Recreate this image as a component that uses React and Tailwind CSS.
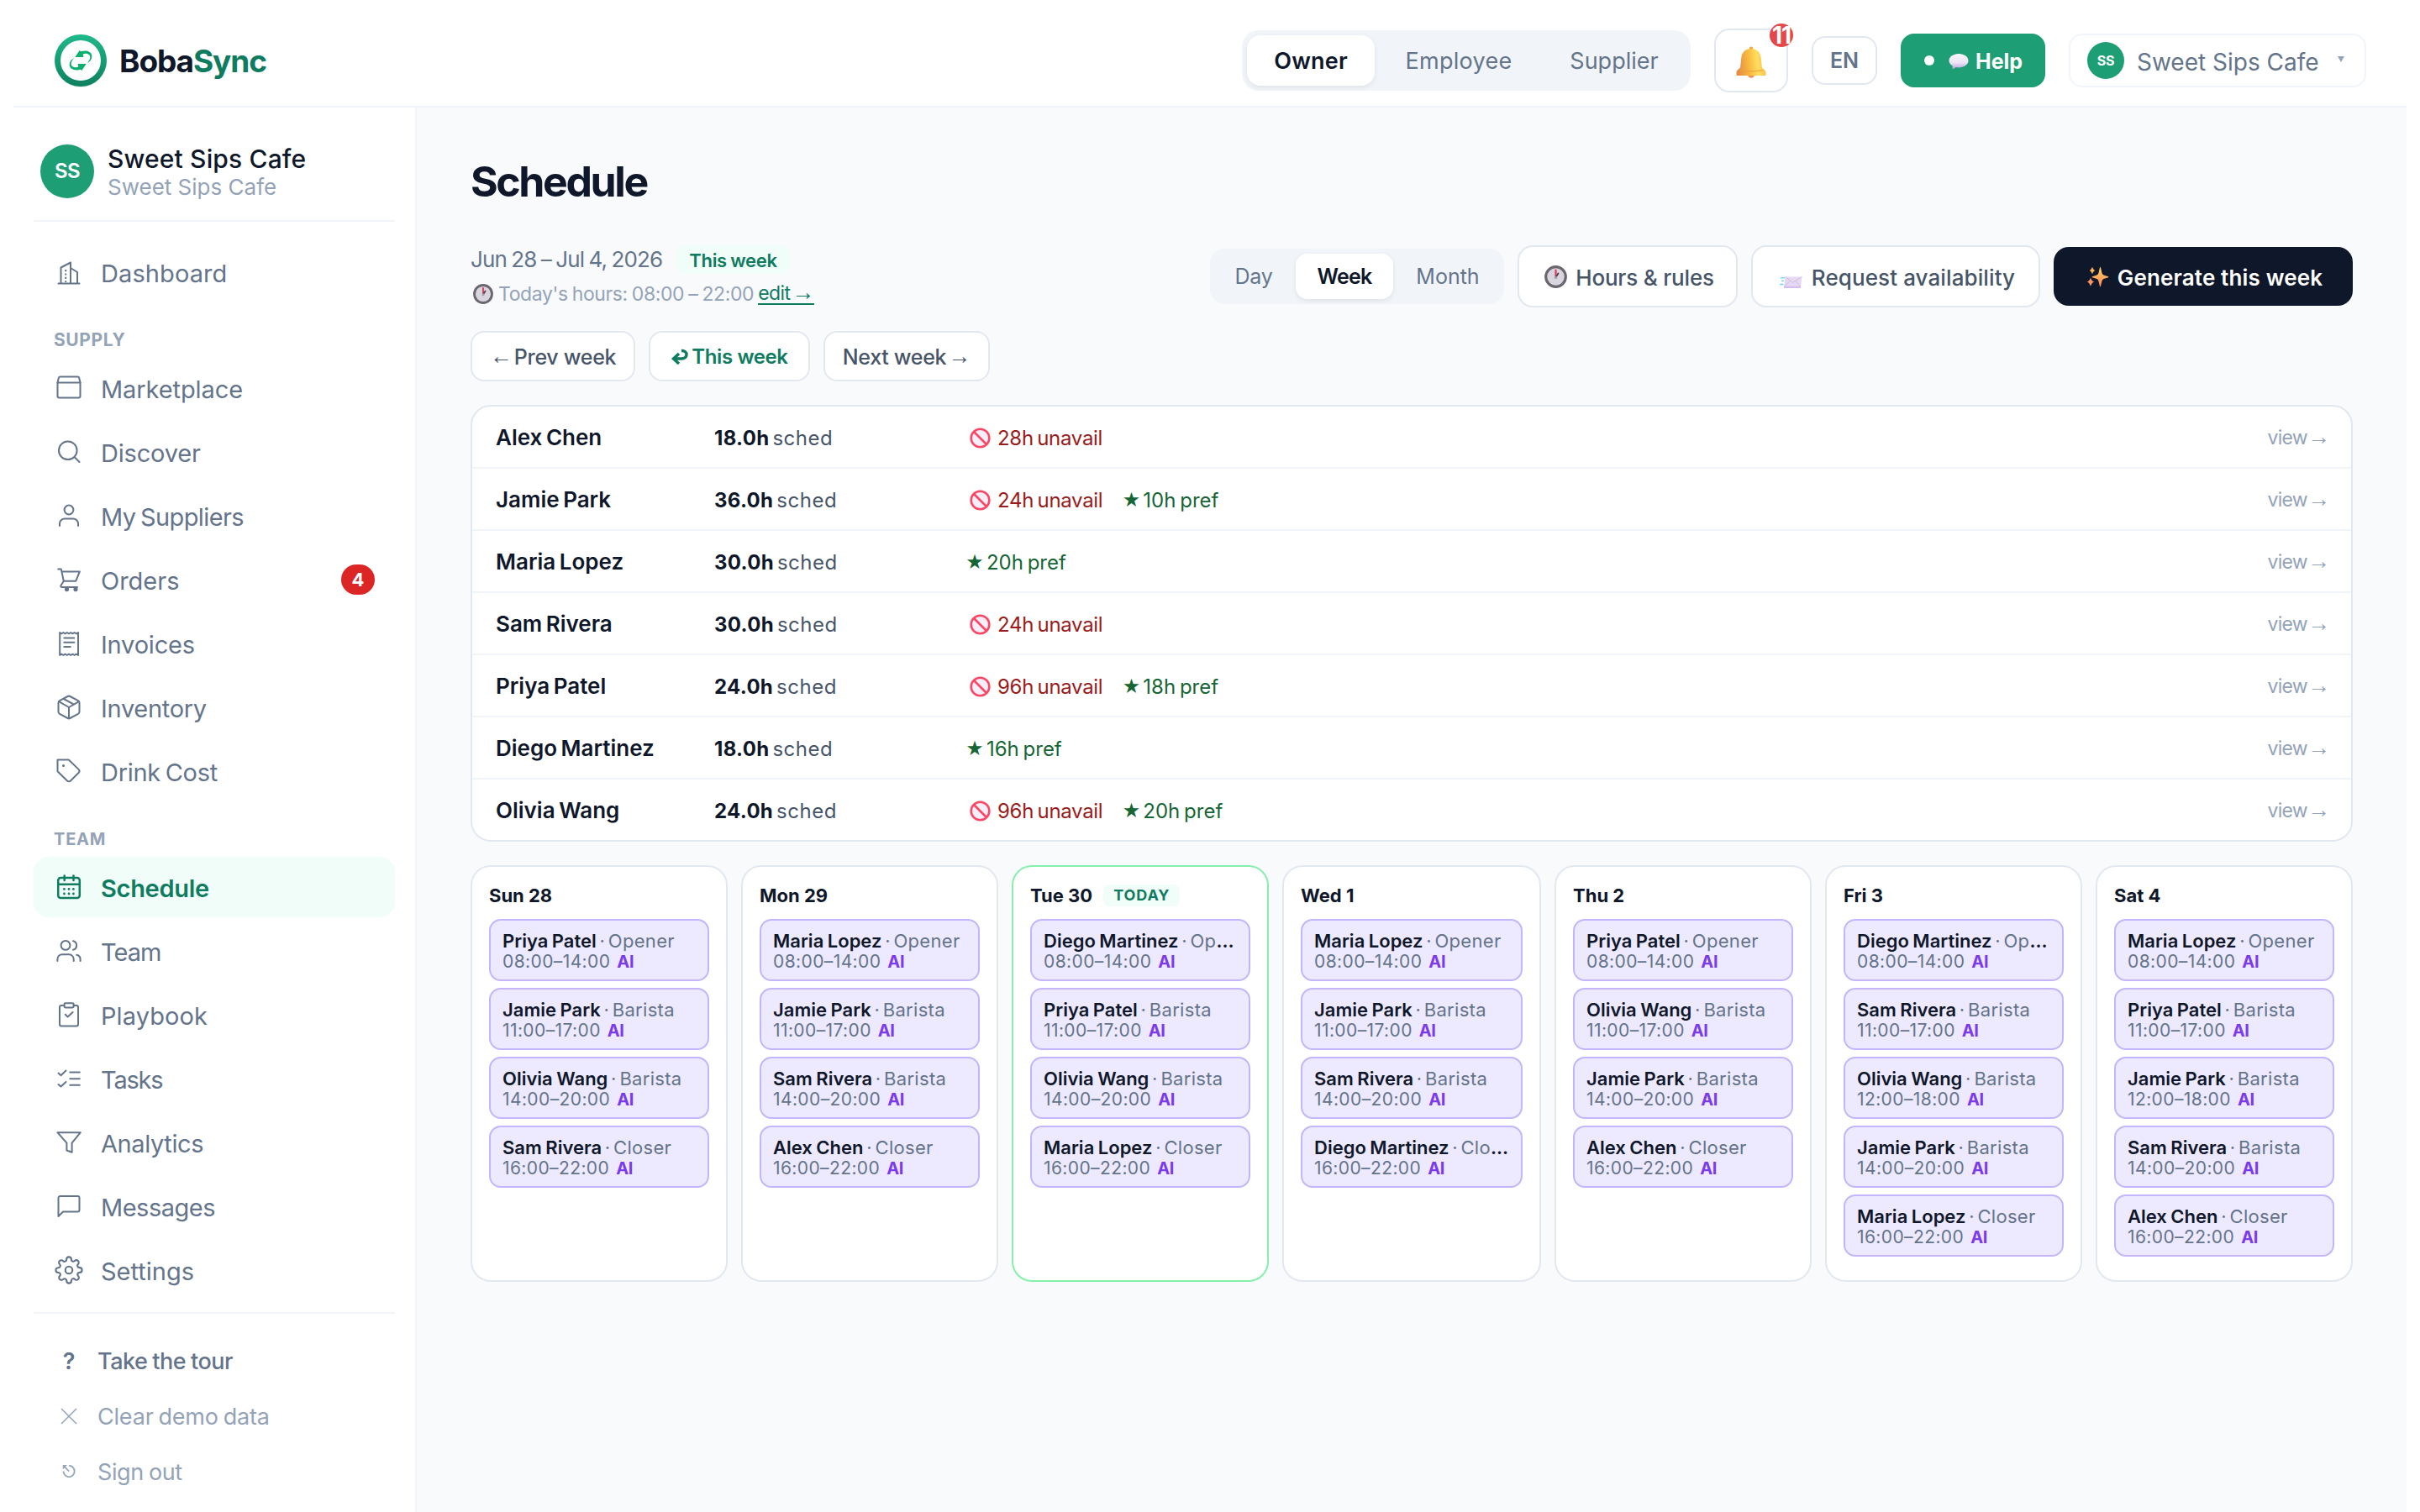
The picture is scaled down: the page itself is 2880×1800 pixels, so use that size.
import { FiSettings } from 'react-icons/fi';

const navIcons = {
  dashboard: (
    <>
      <path d="M6.5 29V10.5L18 4.5V29M18 11l8 5V29M3.5 29.5h25" />
      <path d="M12.2 13v15" strokeDasharray="2.2 2.2" strokeLinecap="butt" />
    </>
  ),
  marketplace: (
    <>
      <path d="M2.5 9.5v16a2 2 0 0 0 2 2h23a2 2 0 0 0 2-2v-16z" />
      <path d="M2.5 9.5 3.8 4a2 2 0 0 1 2-1.6h20.4a2 2 0 0 1 2 1.6l1.3 5.5" />
    </>
  ),
  discover: (
    <>
      <circle cx="14.8" cy="14.3" r="10.8" />
      <path d="m22.7 22.2 5.8 5.8" />
    </>
  ),
  suppliers: (
    <>
      <circle cx="16" cy="9" r="5.4" />
      <path d="M5 28v-2.5a6 6 0 0 1 6-6h10a6 6 0 0 1 6 6V28" />
    </>
  ),
  orders: (
    <>
      <path d="M3.2 3.6h3.6l3 14.2h14.4l4.6-11.3H7.5M9.8 17.8 6.5 23a1.3 1.3 0 0 0 1.2 2H26" />
      <circle cx="13.5" cy="27.6" r="1.6" fill="currentColor" />
      <circle cx="24" cy="27.6" r="1.6" fill="currentColor" />
    </>
  ),
  invoices: (
    <>
      <path d="M5.2 3v27l2-1.3 2.2 1.3 2.2-1.3 2.2 1.3 2.2-1.3 2.2 1.3 2.2-1.3 2.2 1.3 2.2-1.3 2.2 1.3V3l-2.2 1.3L22.6 3l-2.2 1.3L18.2 3 16 4.3 13.8 3l-2.2 1.3L9.4 3 7.2 4.3z" />
      <path d="M10.3 9.5h12M10.3 14.8h12M10.3 20h7.5" />
    </>
  ),
  inventory: (
    <>
      <path d="M14.6 3a3 3 0 0 1 2.8 0l9.6 5.2a3 3 0 0 1 1.5 2.6v10.4a3 3 0 0 1-1.5 2.6l-9.6 5.2a3 3 0 0 1-2.8 0L5 23.8a3 3 0 0 1-1.5-2.6V10.8A3 3 0 0 1 5 8.2z" />
      <path d="M4 9.2 16 16l12-6.8M16 16v13.3M9.8 6 22 12.6" />
    </>
  ),
  drink: (
    <>
      <path d="M2.5 2.5h13.3l12 11.6a2.8 2.8 0 0 1 0 3.6l-9.8 9.8a2.8 2.8 0 0 1-4 0L2.5 16.2z" />
      <circle cx="9.5" cy="9.5" r="0.6" fill="currentColor" />
    </>
  ),
  schedule: (
    <>
      <rect x="3.2" y="5" width="25.6" height="24" rx="3" />
      <path d="M3.2 12.8h25.6M10.7 2.5v5.6M21.5 2.5v5.6" />
      <path d="M10.4 18.4h.01M16 18.4h.01M21.4 18.4h.01M10.4 24h.01M16 24h.01M21.4 24h.01" strokeWidth="2.8" />
    </>
  ),
  team: (
    <>
      <circle cx="12" cy="9.4" r="5.4" />
      <path d="M2.4 28v-2.2a5.5 5.5 0 0 1 5.5-5.5h8.3a5.5 5.5 0 0 1 5.5 5.5V28M21 4.2a5.4 5.4 0 0 1 0 10.5M25.2 20.7a5.5 5.5 0 0 1 4.4 5.2V28" />
    </>
  ),
  playbook: (
    <>
      <path d="M10.5 5H7a2 2 0 0 0-2 2v20.5a2 2 0 0 0 2 2h18a2 2 0 0 0 2-2V7a2 2 0 0 0-2-2h-3.5" />
      <rect x="10.5" y="2.2" width="11.2" height="5.2" rx="1.4" />
      <path d="m11.8 15.8 2.8 2.8 6-5.6" />
    </>
  ),
  tasks: (
    <path d="m3.5 9.6 3 2.6 6-5.6M3.5 23l3 2.6 6-5.6M17.3 8.6h11.5M17.3 16.2h11.5M17.3 23.8h11.5" />
  ),
  analytics: <path d="M2.4 4.2h27.4L19.6 16.6v11.2l-6.2-2.3v-8.9z" />,
  messages: <path d="M3.5 28V6a2 2 0 0 1 2-2h21a2 2 0 0 1 2 2v14.5a2 2 0 0 1-2 2H9z" />,
};

function NavIcon({ name, active }) {
  if (name === 'settings') return <FiSettings size={34} strokeWidth={1.5} />;
  return (
    <svg
      width="32"
      height="32"
      viewBox="0 0 32 32"
      fill="none"
      stroke="currentColor"
      strokeWidth={active ? 2.5 : 2}
      strokeLinecap="round"
      strokeLinejoin="round"
    >
      {navIcons[name]}
    </svg>
  );
}

function Logo() {
  return (
    <svg width="64" height="64" viewBox="0 0 64 64" className="overflow-visible">
      <defs>
        <linearGradient id="ring" x1="0" y1="0" x2="0" y2="1">
          <stop offset="0" stopColor="#1fb98b" />
          <stop offset="1" stopColor="#0e8060" />
        </linearGradient>
      </defs>
      <circle cx="32" cy="33" r="31" fill="#0e8060" opacity="0.15" />
      <circle cx="32" cy="32" r="31" fill="url(#ring)" />
      <circle cx="32" cy="32" r="24" fill="#fff" />
      <g fill="#0bb06e">
        <path d="M25.3 28 30.7 20l1.4 1.2C39 19.5 44.5 21.5 45.2 26c.5 4-1.6 7.3-5.2 8.8 3.5-3.8 4.3-7.8 1.8-9.8-2-1.5-4.6-1.5-7.1-.6l.7 3.6z" />
        <path
          d="M25.3 28 30.7 20l1.4 1.2C39 19.5 44.5 21.5 45.2 26c.5 4-1.6 7.3-5.2 8.8 3.5-3.8 4.3-7.8 1.8-9.8-2-1.5-4.6-1.5-7.1-.6l.7 3.6z"
          transform="rotate(180 32 32)"
        />
      </g>
    </svg>
  );
}

function Bell() {
  return (
    <svg width="36" height="38" viewBox="0 0 36 38">
      <defs>
        <linearGradient id="bell" x1="0" y1="0.4" x2="1" y2="0.3">
          <stop offset="0" stopColor="#e58a45" />
          <stop offset="0.4" stopColor="#f9b93f" />
          <stop offset="0.7" stopColor="#ffdf5e" />
          <stop offset="1" stopColor="#f7b748" />
        </linearGradient>
      </defs>
      <circle cx="18" cy="33.5" r="4.2" fill="#ef8f5c" />
      <circle cx="18" cy="2.8" r="2.2" fill="#f3a73d" />
      <path d="M18 3c7 0 11 4.500 11.700 11l1.200 11c.3 1.800 4.600 3 4.600 6.500V34c0 .6-.4 1-1 1H1.500c-.6 0-1-.4-1-1v-2.500C.5 28 4.800 26.800 5.100 25l1.200-11C7 7.500 11 3 18 3z" fill="url(#bell)" />
      <path d="M4 28.500c9 1.600 19 1.600 28 0" stroke="#eda03c" strokeWidth="1.500" fill="none" opacity="0.7" />
    </svg>
  );
}

function Clock({ size }) {
  return (
    <svg width={size} height={size} viewBox="0 0 24 24" className="shrink-0">
      <circle cx="12" cy="12" r="10.500" fill="#d9d5df" stroke="#6b6670" strokeWidth="2.800" />
      <path d="M12 12.500V5" stroke="#e0405e" strokeWidth="2" strokeLinecap="round" />
      <path d="m12 12.500 2.600-4" stroke="#4a4650" strokeWidth="1.800" strokeLinecap="round" />
      <circle cx="12" cy="12.800" r="1.500" fill="#a49cb0" />
    </svg>
  );
}

function Bubble() {
  return (
    <svg width="24" height="20" viewBox="0 0 24 20">
      <defs>
        <linearGradient id="bubble" x1="0" y1="0" x2="0" y2="1">
          <stop offset="0" stopColor="#faf7fd" />
          <stop offset="0.6" stopColor="#ece4f6" />
          <stop offset="1" stopColor="#b9a3dd" />
        </linearGradient>
      </defs>
      <path d="M12 1c6.400 0 11.500 3.600 11.500 8.200S18.400 17.400 12 17.400c-1.300 0-2.500-.1-3.600-.4-.8.800-2 2-3.300 2-.7 0-.4-2.300-.4-3.600C2.200 13.900.5 11.700.5 9.200.5 4.600 5.600 1 12 1z" fill="url(#bubble)" />
    </svg>
  );
}

function Envelope() {
  return (
    <svg width="27" height="15" viewBox="0 0 27 15">
      <path d="M1 1.800h5M2 5.300h3M.5 9.500h4" stroke="#5fd0f5" strokeWidth="1.300" />
      <path d="M6.500.5h20L24.800 14H5z" fill="#e6daf2" />
      <path d="M5.200 11.800H25L24.800 14H5z" fill="#d5bdf0" />
      <path d="m6.500.5 9 6.800 11-6.800M5.200 12l7.300-6.500M25 12l-6.500-6.500" stroke="#c9b4de" fill="none" strokeWidth="0.800" />
    </svg>
  );
}

function Sparkles() {
  return (
    <svg width="27" height="25" viewBox="0 0 27 25">
      <defs>
        <linearGradient id="spark" x1="0" y1="0" x2="0" y2="1">
          <stop offset="0" stopColor="#ffd257" />
          <stop offset="1" stopColor="#ff8660" />
        </linearGradient>
      </defs>
      <path d="M16.500.8c.9 0 1.400 7.300 3 9 1.400 1.500 7 2 7 3s-5.600 1.600-7 3c-1.600 1.700-2.100 8.700-3 8.700s-1.500-7-3-8.700c-1.400-1.400-7-2-7-3s5.600-1.500 7-3c1.500-1.700 2.100-9 3-9z" fill="url(#spark)" />
      <path d="M7 1c.5 0 .8 3.300 3.700 4C7.800 5.700 7.500 9 7 9s-.8-3.300-3.700-4C6.200 4.300 6.500 1 7 1z" fill="#ffb35a" />
      <path d="M5 14c.6 0 .9 3.800 4.500 4.600C5.900 19.400 5.600 23.500 5 23.500s-.9-4.100-4.500-4.900C4.100 17.800 4.400 14 5 14z" fill="#ff9368" />
    </svg>
  );
}

function Ban() {
  return (
    <svg width="25" height="25" viewBox="0 0 25 25">
      <circle cx="12.500" cy="12.500" r="10.800" fill="#f6effb" stroke="#fb4764" strokeWidth="2.600" />
      <path d="m5 5 15 15" stroke="#fb4764" strokeWidth="2.600" />
    </svg>
  );
}

const topNav = [{ id: 'dashboard', label: 'Dashboard', text: 'tracking-[0.1px]' }];

const supplyNav = [
  { id: 'marketplace', label: 'Marketplace', text: 'tracking-[-0.1px]' },
  { id: 'discover', label: 'Discover', text: 'tracking-[-0.2px]' },
  { id: 'suppliers', label: 'My Suppliers', text: 'tracking-[-0.6px] [word-spacing:-2px]' },
  { id: 'orders', label: 'Orders', text: '', badge: 4 },
  { id: 'invoices', label: 'Invoices', text: 'tracking-[-0.2px]' },
  { id: 'inventory', label: 'Inventory', text: 'tracking-[-0.3px]' },
  { id: 'drink', label: 'Drink Cost', text: 'tracking-[-0.3px] [word-spacing:-2px]' },
];

const teamNav = [
  { id: 'schedule', label: 'Schedule', text: 'tracking-[-0.3px]' },
  { id: 'team', label: 'Team', text: 'tracking-[-1px]' },
  { id: 'playbook', label: 'Playbook', text: 'tracking-[0.1px]' },
  { id: 'tasks', label: 'Tasks', text: 'tracking-[-1.2px]' },
  { id: 'analytics', label: 'Analytics', text: 'tracking-[-0.4px]' },
  { id: 'messages', label: 'Messages', text: 'tracking-[-0.5px]' },
  { id: 'settings', label: 'Settings', text: '' },
];

const staff = [
  { name: 'Alex Chen', hours: '18.0h', unavail: '28h' },
  { name: 'Jamie Park', hours: '36.0h', unavail: '24h', pref: '10h' },
  { name: 'Maria Lopez', hours: '30.0h', pref: '20h' },
  { name: 'Sam Rivera', hours: '30.0h', unavail: '24h' },
  { name: 'Priya Patel', hours: '24.0h', unavail: '96h', pref: '18h' },
  { name: 'Diego Martinez', hours: '18.0h', pref: '16h' },
  { name: 'Olivia Wang', hours: '24.0h', unavail: '96h', pref: '20h' },
];

const days = [
  {
    label: 'Sun 28',
    shifts: [
      ['Priya Patel', 'Opener', '08:00–14:00'],
      ['Jamie Park', 'Barista', '11:00–17:00'],
      ['Olivia Wang', 'Barista', '14:00–20:00'],
      ['Sam Rivera', 'Closer', '16:00–22:00'],
    ],
  },
  {
    label: 'Mon 29',
    shifts: [
      ['Maria Lopez', 'Opener', '08:00–14:00'],
      ['Jamie Park', 'Barista', '11:00–17:00'],
      ['Sam Rivera', 'Barista', '14:00–20:00'],
      ['Alex Chen', 'Closer', '16:00–22:00'],
    ],
  },
  {
    label: 'Tue 30',
    today: true,
    shifts: [
      ['Diego Martinez', 'Opener', '08:00–14:00'],
      ['Priya Patel', 'Barista', '11:00–17:00'],
      ['Olivia Wang', 'Barista', '14:00–20:00'],
      ['Maria Lopez', 'Closer', '16:00–22:00'],
    ],
  },
  {
    label: 'Wed 1',
    shifts: [
      ['Maria Lopez', 'Opener', '08:00–14:00'],
      ['Jamie Park', 'Barista', '11:00–17:00'],
      ['Sam Rivera', 'Barista', '14:00–20:00'],
      ['Diego Martinez', 'Closer', '16:00–22:00'],
    ],
  },
  {
    label: 'Thu 2',
    shifts: [
      ['Priya Patel', 'Opener', '08:00–14:00'],
      ['Olivia Wang', 'Barista', '11:00–17:00'],
      ['Jamie Park', 'Barista', '14:00–20:00'],
      ['Alex Chen', 'Closer', '16:00–22:00'],
    ],
  },
  {
    label: 'Fri 3',
    shifts: [
      ['Diego Martinez', 'Opener', '08:00–14:00'],
      ['Sam Rivera', 'Barista', '11:00–17:00'],
      ['Olivia Wang', 'Barista', '12:00–18:00'],
      ['Jamie Park', 'Barista', '14:00–20:00'],
      ['Maria Lopez', 'Closer', '16:00–22:00'],
    ],
  },
  {
    label: 'Sat 4',
    shifts: [
      ['Maria Lopez', 'Opener', '08:00–14:00'],
      ['Priya Patel', 'Barista', '11:00–17:00'],
      ['Jamie Park', 'Barista', '12:00–18:00'],
      ['Sam Rivera', 'Barista', '14:00–20:00'],
      ['Alex Chen', 'Closer', '16:00–22:00'],
    ],
  },
];

function Arrow({ children }) {
  return <span className="-mt-1.5 font-['Noto_Sans'] text-[27px] leading-none font-normal tracking-normal">{children}</span>;
}

function Header() {
  return (
    <header className="mx-4 h-32 shrink-0 flex items-center pt-[18px] pl-12 pr-12 border-b-2 border-[#f1f5f9]">
      <div className="flex items-center gap-3.5">
        <Logo />
        <span className="text-[37px] font-bold leading-none tracking-[-1.1px] text-[#0f172a]">
          Boba<span className="text-[#0f7b5f]">Sync</span>
        </span>
      </div>

      <div className="ml-auto flex items-center gap-7">
        <div className="flex gap-1 p-1.5 h-[72px] rounded-[20px] bg-[#f1f5f9] text-[27px] text-[#64748b]">
          <button className="w-[152px] pt-0.5 rounded-2xl bg-white shadow-[0_2px_6px_rgba(0,0,0,0.08)] font-semibold text-[#0f172a] tracking-[0.2px]">
            Owner
          </button>
          <button className="w-[192px] pt-0.5 tracking-[0.3px]">Employee</button>
          <button className="w-[170px] pt-0.5">Supplier</button>
        </div>

        <button className="relative w-[88px] h-[76px] flex items-center justify-center pt-1 rounded-[18px] border-2 border-[#e2e8f0] bg-white">
          <Bell />
          <span className="absolute -top-2 -right-2 w-7 h-7 flex items-center justify-center rounded-full bg-[#e54848] text-white text-[28px] leading-none font-bold tracking-[-1px]">
            11
          </span>
        </button>

        <button className="w-[78px] h-[58px] rounded-2xl border-2 border-[#e2e8f0] bg-white text-[25px] leading-none font-semibold text-[#64748b]">
          EN
        </button>

        <button className="w-[172px] h-16 pl-7 flex items-center rounded-2xl bg-[#1d9e75] text-white">
          <span className="w-3 h-3 rounded-full bg-white" />
          <span className="ml-[17px] mt-0.5"><Bubble /></span>
          <span className="ml-2 mt-0.5 text-[25px] leading-none font-bold">Help</span>
        </button>

        <button className="w-[354px] h-16 px-5 flex items-center rounded-2xl border-2 border-[#f1f5f9] bg-white">
          <span className="w-11 h-11 flex items-center justify-center rounded-full bg-[#1d9e75] text-white text-[16px] leading-none font-bold tracking-[-0.3px]">
            SS
          </span>
          <span className="ml-[15px] mt-[3px] text-[28px] leading-none text-[#64748b]">Sweet Sips Cafe</span>
          <svg width="10" height="8" viewBox="0 0 10 8" className="ml-auto mr-[3px] mb-1">
            <path d="M1 1h8L5 8z" fill="#94a3b8" />
          </svg>
        </button>
      </div>
    </header>
  );
}

function NavList({ items, activeItem }) {
  return (
    <nav className="flex flex-col gap-1">
      {items.map((item) => (
        <button
          key={item.id}
          className={`h-[72px] px-6 flex items-center gap-5 rounded-[18px] text-[29px] leading-none ${
            activeItem === item.id ? 'bg-[#f0fdf9] text-[#0f7b5f] font-semibold' : 'text-[#64748b]'
          }`}
        >
          <span className="w-9 flex justify-center">
            <NavIcon name={item.id} active={activeItem === item.id} />
          </span>
          <span className={`pt-[3px] ${item.text}`}>{item.label}</span>
          {item.badge && (
            <span className="ml-auto w-10 h-9 flex items-center justify-center rounded-full bg-[#dc2626] text-white text-[22px] font-bold">
              {item.badge}
            </span>
          )}
        </button>
      ))}
    </nav>
  );
}

function Sidebar() {
  return (
    <aside className="w-[480px] shrink-0 h-full px-6 pt-11 bg-white border-r-2 border-[#f1f5f9]">
      {/* Account */}
      <div className="flex gap-4 px-2 pb-[22px] border-b-2 border-[#f1f5f9]">
        <span className="w-16 h-16 flex items-center justify-center rounded-full bg-[#1d9e75] text-white text-[24px] font-semibold tracking-[-0.5px]">
          SS
        </span>
        <div>
          <div className="text-[30px] leading-[34px] font-medium text-[#0f172a] tracking-[0.15px]">Sweet Sips Cafe</div>
          <div className="text-[26px] leading-[34px] text-[#94a3b8]">Sweet Sips Cafe</div>
        </div>
      </div>

      <div className="mt-6">
        <NavList items={topNav} />
      </div>
      <div className="h-[66px] pt-[34px] px-6 text-[21px] leading-[22px] font-bold text-[#94a3b8] tracking-[0.6px]">SUPPLY</div>
      <NavList items={supplyNav} />
      <div className="h-[66px] pt-[34px] px-6 text-[20px] leading-[22px] font-bold text-[#94a3b8] tracking-[0.8px]">TEAM</div>
      <NavList items={teamNav} activeItem="schedule" />

      {/* Footer links */}
      <div className="mt-3.5 pt-[23px] border-t-2 border-[#f1f5f9] text-[27px] leading-none text-[#94a3b8]">
        <div className="h-[66px] px-6 flex items-center gap-4 font-medium text-[#64748b]">
          <span className="w-9 text-center font-semibold">?</span>
          <span className="tracking-[-0.45px] [word-spacing:-1px]">Take the tour</span>
        </div>
        <div className="h-[66px] px-6 flex items-center gap-4">
          <span className="w-9 flex justify-center">
            <svg width="20" height="20" viewBox="0 0 20 20" stroke="currentColor" strokeWidth="1.500">
              <path d="m1 1 18 18M19 1 1 19" />
            </svg>
          </span>
          <span className="tracking-[-0.2px] [word-spacing:-1.500px]">Clear demo data</span>
        </div>
        <div className="h-[66px] px-6 flex items-center gap-4">
          <span className="w-9 text-center text-[20px]">⎋</span>
          <span className="tracking-[-0.4px] [word-spacing:-1px]">Sign out</span>
        </div>
      </div>
    </aside>
  );
}

function Toolbar() {
  return (
    <div className="mt-[46px] h-[74px] flex items-start justify-between">
      <div>
        <div className="h-[34px] flex items-center gap-4">
          <span className="text-[26px] leading-none text-[#64748b] tracking-[-0.9px] [word-spacing:-1px]">
            Jun 28 – Jul 4, 2026
          </span>
          <span className="h-[34px] px-4 pt-0.5 flex items-center rounded-xl bg-[#f0fdf9] text-[22px] leading-none font-semibold text-[#0f7b5f] tracking-[-0.3px] [word-spacing:-1px]">
            This week
          </span>
        </div>
        <div className="mt-[9px] h-[30px] pl-[3px] flex items-center text-[23px] leading-none text-[#94a3b8]">
          <Clock size={24} />
          <span className="ml-1.5 tracking-[-0.4px] [word-spacing:-1px]">Today's hours: 08:00 – 22:00</span>
          <span className="ml-[5px] h-[26px] flex items-center gap-0.5 border-b-2 border-[#0f7b5f] text-[#0f7b5f] tracking-[-0.6px]">
            edit <Arrow>→</Arrow>
          </span>
        </div>
      </div>

      <div className="h-[74px] flex items-center gap-4">
        <div className="h-[66px] p-1.5 flex gap-1 rounded-[18px] bg-[#f1f5f9] text-[25px] text-[#64748b]">
          <button className="w-[92px] pt-0.5 tracking-[-0.3px]">Day</button>
          <button className="w-[116px] pt-0.5 rounded-[14px] bg-white shadow-[0_2px_6px_rgba(0,0,0,0.08)] font-semibold text-[#0f172a] tracking-[-0.8px]">
            Week
          </button>
          <button className="w-[122px] pt-0.5">Month</button>
        </div>
        <button className="w-[262px] h-[74px] pl-1 flex items-center justify-center gap-[10px] rounded-[18px] border-2 border-[#e2e8f0] bg-white text-[26px] leading-none font-medium text-[#475569]">
          <Clock size={27} />
          <span className="mt-[3px] tracking-[-0.2px]">Hours &amp; rules</span>
        </button>
        <button className="w-[344px] h-[74px] pl-1 flex items-center justify-center gap-[11px] rounded-[18px] border-2 border-[#e2e8f0] bg-white text-[26px] leading-none font-medium text-[#475569]">
          <span className="mt-[15px]"><Envelope /></span>
          <span className="mt-[3px] tracking-[0.1px]">Request availability</span>
        </button>
        <button className="w-[356px] h-[70px] pl-[3px] flex items-center justify-center gap-[10px] rounded-[18px] bg-[#0f172a] text-[26px] leading-none font-semibold text-white">
          <Sparkles />
          <span className="mt-[3px] tracking-[0.15px]">Generate this week</span>
        </button>
      </div>
    </div>
  );
}

function WeekNav() {
  return (
    <div className="mt-7 flex gap-4 text-[25px] leading-none font-medium text-[#475569] [word-spacing:-2px]">
      <button className="w-[196px] h-[60px] pt-0.5 flex items-center justify-center gap-0.5 rounded-2xl border-2 border-[#e2e8f0] bg-white tracking-[-0.3px]">
        <Arrow>←</Arrow> Prev week
      </button>
      <button className="w-[192px] h-[60px] pt-0.5 flex items-center justify-center gap-[3px] rounded-2xl border-2 border-[#e2e8f0] bg-white text-[24px] font-semibold text-[#0f7b5f] tracking-[-0.4px]">
        <svg width="22" height="20" viewBox="0 0 22 20" fill="none" stroke="currentColor" strokeWidth="3.500">
          <path d="M13 2.500c8-.5 8 9.500 0 9.500H5M10 6l-6.500 6 6.500 6" />
        </svg>
        This week
      </button>
      <button className="w-[198px] h-[60px] pt-0.5 flex items-center justify-center gap-0.5 rounded-2xl border-2 border-[#e2e8f0] bg-white tracking-[-0.3px]">
        Next week <Arrow>→</Arrow>
      </button>
    </div>
  );
}

function StaffTable() {
  return (
    <div className="mt-7 rounded-[24px] border-2 border-[#e2e8f0] bg-white divide-y-2 divide-[#f1f5f9]">
      {staff.map((s) => (
        <div key={s.name} className="h-[74px] last:h-[72px] pt-px flex items-center px-7 text-[24px] leading-none">
          <span className="w-[260px] text-[26px] font-semibold text-[#0f172a] [word-spacing:-2px]">{s.name}</span>
          <span className="w-[299px] pt-0.5 flex gap-1 text-[#475569]">
            <b className="font-bold text-[#0f172a] tracking-[0.3px]">{s.hours}</b>
            <span className="tracking-[0.5px]">sched</span>
          </span>
          <span className="pt-0.5 flex gap-[23px] [word-spacing:-2px]">
            {s.unavail && (
              <span className="flex items-center gap-2 pl-[5px] text-[#991b1b]">
                <Ban />
                <span className="tracking-[-0.3px]">{s.unavail} unavail</span>
              </span>
            )}
            {s.pref && (
              <span className="flex items-center gap-[3px] text-[#166534]">
                <span className="text-[21px]">★</span>
                <span>{s.pref} pref</span>
              </span>
            )}
          </span>
          <span className="ml-auto -mr-[3px] pt-0.5 flex items-center text-[23px] text-[#94a3b8] tracking-[-0.7px]">
            view <Arrow>→</Arrow>
          </span>
        </div>
      ))}
    </div>
  );
}

function Shift({ name, role, time }) {
  return (
    <div className="h-[74px] pt-3 pl-3.5 pr-[11px] rounded-[14px] border-2 border-[#c4b5fd] bg-[#ede9fe]">
      <div className="truncate text-[22px] leading-[25px] font-semibold text-[#0f172a] [word-spacing:-1px]">
        {name}
        <span className="font-normal text-[#64748b] tracking-[0.3px] [word-spacing:-2.800px]"> · {role}</span>
      </div>
      <div className="text-[21px] leading-[24px] text-[#64748b] tracking-[0.4px]">
        {time}
        <span className="ml-2 text-[20px] font-bold text-[#7c3aed] tracking-[-0.4px]">AI</span>
      </div>
    </div>
  );
}

function DayColumn({ day }) {
  return (
    <div
      className={`min-w-0 h-[496px] px-5 pt-[19px] rounded-[24px] border-2 bg-white ${
        day.today ? 'border-[#86efac]' : 'border-[#e2e8f0]'
      }`}
    >
      <div className="h-[30px] mb-[13px] flex items-center gap-[13px] text-[22px] font-bold text-[#0f172a]">
        {day.label}
        {day.today && (
          <span className="h-[26px] px-3 flex items-center rounded-lg bg-[#f0fdf9] text-[18px] leading-none text-[#0f7b5f] tracking-[0.9px]">
            TODAY
          </span>
        )}
      </div>
      <div className="flex flex-col gap-2">
        {day.shifts.map(([name, role, time]) => (
          <Shift key={time} name={name} role={role} time={time} />
        ))}
      </div>
    </div>
  );
}

export default function App() {
  return (
    <div className="w-[2880px] h-[1800px] flex flex-col overflow-hidden bg-white font-['Inter',sans-serif]">
      <Header />
      <div className="mx-4 flex-1 min-h-0 flex">
        <Sidebar />
        <main className="flex-1 min-w-0 px-16 pt-[58px] bg-[#f8fafc]">
          <h1 className="h-[60px] text-[50px] leading-[60px] font-bold text-[#0f172a] tracking-[-2.4px]">Schedule</h1>
          <Toolbar />
          <WeekNav />
          <StaffTable />
          <div className="mt-7 grid grid-cols-[306px_306px_306px_308px_306px_306px_306px] gap-4">
            {days.map((day) => (
              <DayColumn key={day.label} day={day} />
            ))}
          </div>
        </main>
      </div>
    </div>
  );
}
